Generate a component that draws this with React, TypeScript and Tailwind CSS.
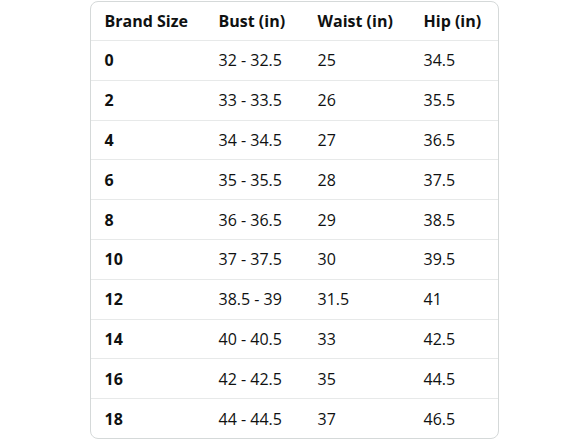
const header = ["Brand Size", "Bust (in)", "Waist (in)", "Hip (in)"];

const rows = [
  ["0", "32 - 32.5", "25", "34.5"],
  ["2", "33 - 33.5", "26", "35.5"],
  ["4", "34 - 34.5", "27", "36.5"],
  ["6", "35 - 35.5", "28", "37.5"],
  ["8", "36 - 36.5", "29", "38.5"],
  ["10", "37 - 37.5", "30", "39.5"],
  ["12", "38.5 - 39", "31.5", "41"],
  ["14", "40 - 40.5", "33", "42.5"],
  ["16", "42 - 42.5", "35", "44.5"],
  ["18", "44 - 44.5", "37", "46.5"],
];

const cols = "grid grid-cols-[114px_99px_106px_88px]";

export default function App() {
  return (
    <div className="w-[588px] h-[441px] bg-white flex justify-center pt-px" style={{ fontFamily: '"Open Sans", "Noto Sans", sans-serif' }}>
      <div className="w-[409px] h-[438px] border border-[#d5d9d9] rounded-lg overflow-hidden text-[#0f1111] text-[16px]">
        <div className={`${cols} h-[39px] items-center font-bold border-b border-[#e7e9e9]`}>
          {header.map((h) => (
            <div key={h} className="pl-[14px]">{h}</div>
          ))}
        </div>
        {rows.map((r, i) => (
          <div
            key={r[0]}
            className={`${cols} h-[39.8px] items-center ${i < rows.length - 1 ? "border-b border-[#e7e9e9]" : ""}`}
          >
            {r.map((c, j) => (
              <div key={j} className={`pl-[14px] ${j === 0 ? "font-bold" : ""}`}>{c}</div>
            ))}
          </div>
        ))}
      </div>
    </div>
  );
}
